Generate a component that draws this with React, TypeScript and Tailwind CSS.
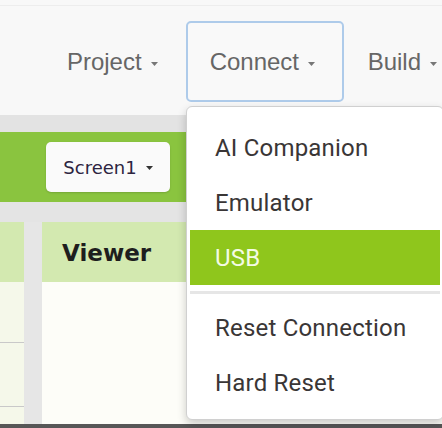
import { ReactNode } from "react";

function Caret({ className = "" }: { className?: string }) {
  return (
    <svg className={className} width="7" height="4" viewBox="0 0 7 4">
      <path d="M0 0h7L3.5 4z" fill="currentColor" />
    </svg>
  );
}

function NavItem({ label, active, className = "" }: { label: string; active?: boolean; className?: string }) {
  return (
    <div
      className={`flex items-center gap-[9px] h-[81px] ${
        active ? "border-2 border-[#aecbea] rounded-[5px] bg-[#f9f9f9]" : "border-2 border-transparent"
      } ${className}`}
    >
      <span>{label}</span>
      <Caret className="mt-[4px] text-[#777]" />
    </div>
  );
}

function MenuItem({ children, selected }: { children: ReactNode; selected?: boolean }) {
  return (
    <div
      className={`h-[55px] flex items-center pl-[25px] ${
        selected ? "bg-[#8fc61c] text-[#f4fbe4]" : "text-[#3a3636]"
      }`}
    >
      {children}
    </div>
  );
}

export default function App() {
  return (
    <div className="relative w-[442px] h-[428px] overflow-hidden bg-[#f8f8f8]">
      {/* Top nav */}
      <div className="h-[115px] pt-[5px]">
        <div className="border-t border-[#ededed]" />
        <div className="flex justify-end mt-[15px] font-['Liberation_Sans',Arial,sans-serif] text-[24px] text-[#666]">
          <NavItem label="Project" className="pr-[26px]" />
          <NavItem label="Connect" active className="w-[158px] pl-[22px]" />
          <NavItem label="Build" className="pl-[22px] pr-[3px]" />
        </div>
      </div>

      {/* Textured strip */}
      <div className="h-[17px] bg-[#e3e3e3]" />

      {/* Green toolbar */}
      <div className="h-[70px] bg-[#8ac43f] flex items-center pl-[46px]">
        <div className="h-[50px] w-[124px] bg-[#fafafa] rounded-[5px] flex items-center justify-center gap-[9px] shadow-[0_1px_2px_rgba(0,0,0,0.15)] font-['DejaVu_Sans',Verdana,sans-serif] text-[18px] text-[#2c2440]">
          <span>Screen1</span>
          <Caret className="mt-[2px] text-[#333]" />
        </div>
      </div>

      {/* Gray strip */}
      <div className="h-[20px] bg-[#e4e4e4]" />

      {/* Panels */}
      <div className="flex h-[202px]">
        <div className="w-[24px] flex flex-col">
          <div className="h-[60px] bg-[#d3e9b0]" />
          <div className="flex-1 bg-[#f5f8ea]">
            <div className="h-[61px] border-b border-[#c9c9c9]" />
            <div className="h-[64px] border-b border-[#c9c9c9]" />
          </div>
        </div>
        <div className="w-[18px] bg-[#e6e6e6]" />
        <div className="flex-1 flex flex-col">
          <div className="h-[60px] bg-[#d3e9b0] flex items-center pl-[20px] pt-[2px] font-['DejaVu_Sans',Verdana,sans-serif] font-bold text-[23px] text-[#1e1e1e]">
            Viewer
          </div>
          <div className="flex-1 bg-[#fdfdf8]" />
        </div>
      </div>

      {/* Bottom strip */}
      <div className="h-[4px] bg-[#575757]" />

      {/* Connect dropdown */}
      <div className="absolute left-[186px] top-[106px] w-[258px] h-[314px] bg-white border border-[#d0d0d0] rounded-[6px] shadow-[0_4px_10px_rgba(0,0,0,0.2)] pt-[13px] px-[3px] font-['Roboto',Arial,sans-serif] text-[24px] tracking-[0.2px]">
        <MenuItem>AI Companion</MenuItem>
        <MenuItem>Emulator</MenuItem>
        <MenuItem selected>USB</MenuItem>
        <div className="h-[15px] flex items-center">
          <div className="w-full h-[3px] bg-[#e6e6e6]" />
        </div>
        <MenuItem>Reset Connection</MenuItem>
        <MenuItem>Hard Reset</MenuItem>
      </div>
    </div>
  );
}
